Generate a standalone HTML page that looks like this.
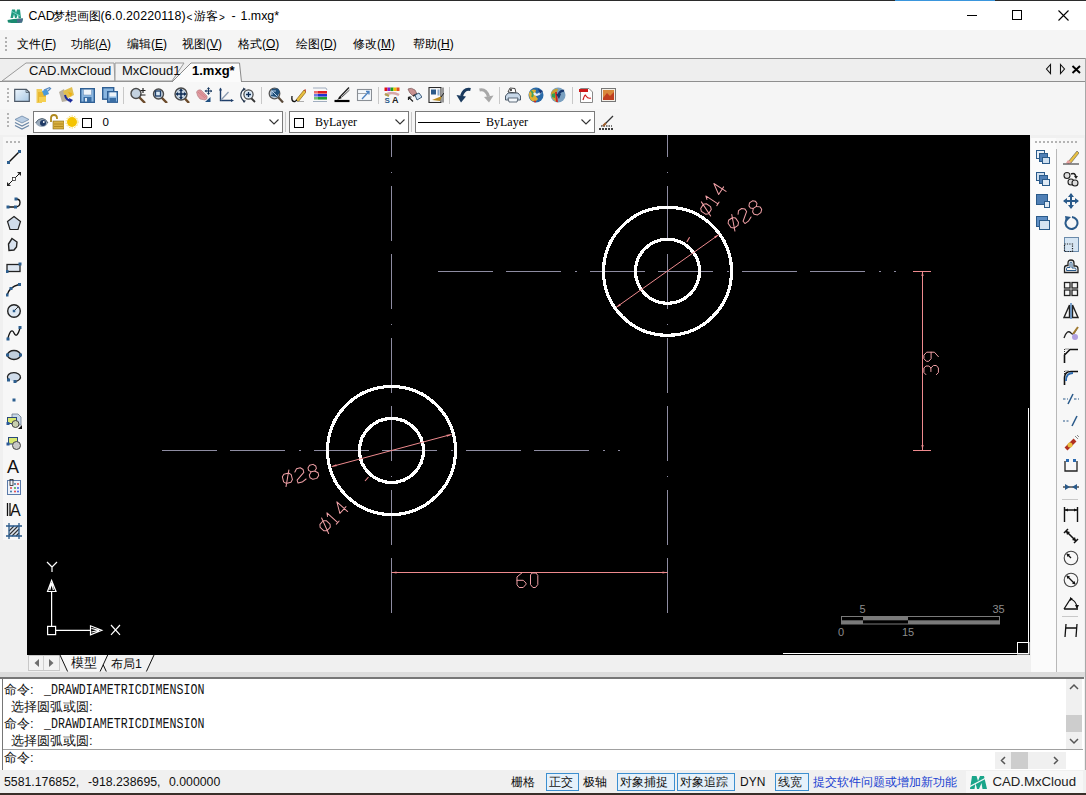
<!DOCTYPE html><html><head><meta charset="utf-8"><style>
html,body{margin:0;padding:0}
body{width:1086px;height:795px;overflow:hidden;position:relative;background:#f0f0f0;font-family:"Liberation Sans",sans-serif;color:#000}
.t{position:absolute;white-space:nowrap;font-size:12px;line-height:14px}
.m{font-family:"Liberation Mono",monospace}
svg{display:block}
</style></head><body>
<div style="position:absolute;left:0px;top:0px;width:1086px;height:30px;background:#fff"></div>
<div style="position:absolute;left:0px;top:0px;width:1086px;height:1px;background:#2b2b2b"></div>
<div style="position:absolute;left:895px;top:0px;width:100px;height:1px;background:#3a96dd"></div>
<svg style="position:absolute;left:7px;top:8px;" width="17" height="16" viewBox="0 0 17 16"><path d="M3.5 10 L5 1.5 H8 L9 5 L10 1.5 H13 L14 10 H11.5 L11 6 L9.5 10 H8 L7 6 L6 10Z" fill="#1f9a80"/><path d="M4 3 L13 8" stroke="#7fe0d0" stroke-width="0.8"/><path d="M0.5 12 Q8 10 16 10.5 L15 14.5 Q8 15.5 1 14.5Z" fill="#1a8a70"/><path d="M10 11 L16 10.5 L15 14.5 L10 14.8Z" fill="#4a6a8a"/></svg>
<div class="t" style="left:28.5px;top:9px;font-size:12.4px;color:#000">CAD</div>
<div class="t" style="left:53px;top:9px;font-size:12.4px;color:#000">梦想画图</div>
<div class="t" style="left:194px;top:9px;font-size:12.4px;color:#000">游客</div>
<div class="t" style="left:231.5px;top:9px;font-size:12.4px;color:#000">-</div>
<div class="t" style="left:240.5px;top:9px;font-size:12.4px;color:#000">1.mxg*</div>
<div class="t" style="left:100.5px;top:9px;font-size:12.4px;color:#000;letter-spacing:0.15px">(6.0.20220118)</div>
<div class="t" style="left:186.5px;top:10.5px;font-size:10px;color:#000">&lt;</div>
<div class="t" style="left:219px;top:10.5px;font-size:10px;color:#000">&gt;</div>
<div style="position:absolute;left:967px;top:15px;width:10px;height:1px;background:#000"></div>
<div style="position:absolute;left:1012px;top:10px;width:9px;height:9px;border:1px solid #000;box-sizing:border-box;width:10px;height:10px"></div>
<svg style="position:absolute;left:1058px;top:10px;" width="11" height="11" viewBox="0 0 11 11"><path d="M0.5 0.5 L10.5 10.5 M10.5 0.5 L0.5 10.5" stroke="#000" stroke-width="1.1"/></svg>
<div style="position:absolute;left:0px;top:30px;width:1086px;height:28px;background:#f5f5f5"></div>
<div style="position:absolute;left:5px;top:37px;width:2px;height:2px;background:#b0b0b0"></div>
<div style="position:absolute;left:5px;top:41px;width:2px;height:2px;background:#b0b0b0"></div>
<div style="position:absolute;left:5px;top:45px;width:2px;height:2px;background:#b0b0b0"></div>
<div style="position:absolute;left:5px;top:49px;width:2px;height:2px;background:#b0b0b0"></div>
<div class="t" style="left:17px;top:37px;font-size:12px;color:#000">文件(<u>F</u>)</div>
<div class="t" style="left:71px;top:37px;font-size:12px;color:#000">功能(<u>A</u>)</div>
<div class="t" style="left:127px;top:37px;font-size:12px;color:#000">编辑(<u>E</u>)</div>
<div class="t" style="left:182px;top:37px;font-size:12px;color:#000">视图(<u>V</u>)</div>
<div class="t" style="left:238px;top:37px;font-size:12px;color:#000">格式(<u>O</u>)</div>
<div class="t" style="left:296px;top:37px;font-size:12px;color:#000">绘图(<u>D</u>)</div>
<div class="t" style="left:353px;top:37px;font-size:12px;color:#000">修改(<u>M</u>)</div>
<div class="t" style="left:413px;top:37px;font-size:12px;color:#000">帮助(<u>H</u>)</div>
<div style="position:absolute;left:0px;top:58px;width:1086px;height:1px;background:#8e8e8e"></div>
<div style="position:absolute;left:0px;top:59px;width:1086px;height:22px;background:#eeeeee"></div>
<div style="position:absolute;left:0px;top:81px;width:1086px;height:1px;background:#8e8e8e"></div>
<svg style="position:absolute;left:0px;top:59px;" width="250" height="24" viewBox="0 0 250 24"><path d="M2 22 L26 4 L114 4 L115 22 Z" fill="#f2f2f2" stroke="#9a9a9a" stroke-width="1"/><path d="M115 22 L115 4 L184 4 L172 22 Z" fill="#f2f2f2" stroke="#9a9a9a" stroke-width="1"/><path d="M172 23 L191 4 L239.5 4 L241.5 23 Z" fill="#fbfbfb" stroke="#8a8a8a" stroke-width="1"/><rect x="173" y="22" width="68" height="2" fill="#fbfbfb"/></svg>
<div class="t" style="left:29px;top:64px;font-size:13px;color:#111">CAD.MxCloud</div>
<div class="t" style="left:122px;top:64px;font-size:13px;color:#111">MxCloud1</div>
<div class="t" style="left:192px;top:64px;font-size:13px;font-weight:bold;color:#000">1.mxg*</div>
<svg style="position:absolute;left:1043px;top:62px;" width="40" height="14" viewBox="0 0 40 14"><path d="M7.5 2.5 L3.5 7 L7.5 11.5 Z" fill="none" stroke="#111" stroke-width="1.1"/><path d="M17.5 2.5 L21.5 7 L17.5 11.5 Z" fill="none" stroke="#111" stroke-width="1.1"/><path d="M29.5 4 L37 11 M37 4 L29.5 11" stroke="#000" stroke-width="1.9"/></svg>
<div style="position:absolute;left:0px;top:82px;width:1086px;height:53px;background:#f5f5f5"></div>
<div style="position:absolute;left:0px;top:82px;width:620px;height:27px;background:#f7f7f7"></div>
<div style="position:absolute;left:7px;top:88px;width:2px;height:2px;background:#b4b4b4"></div>
<div style="position:absolute;left:7px;top:92px;width:2px;height:2px;background:#b4b4b4"></div>
<div style="position:absolute;left:7px;top:96px;width:2px;height:2px;background:#b4b4b4"></div>
<div style="position:absolute;left:7px;top:100px;width:2px;height:2px;background:#b4b4b4"></div>
<svg style="position:absolute;left:14px;top:87px;" width="16" height="16" viewBox="0 0 16 16"><defs><linearGradient id="gnew" x1="0" y1="0" x2="1" y2="1"><stop offset="0" stop-color="#eef6fd"/><stop offset="1" stop-color="#a9c8e4"/></linearGradient></defs><path d="M0.7 2.3 H12.3 L15.3 5.3 V14.3 H0.7 Z" fill="url(#gnew)" stroke="#4e5a68" stroke-width="1.2"/><path d="M12 2.5 V5.5 H15" fill="none" stroke="#4e5a68" stroke-width="0.8"/></svg>
<svg style="position:absolute;left:36px;top:87px;" width="16" height="16" viewBox="0 0 16 16"><path d="M0.5 2 H6 V16 H0.5Z" fill="#f0cc58"/><path d="M2 5 H10 V15 H2Z" fill="#e8b830"/><path d="M6 4 L11 2 L13 7 L8 9Z" fill="#4a9ad8"/><path d="M8 3 L14 0.5 M12 4 L15 1" stroke="#5a8ac0" stroke-width="1.3"/><rect x="3" y="10" width="7" height="5" fill="#f5d050"/></svg>
<svg style="position:absolute;left:58px;top:87px;" width="16" height="16" viewBox="0 0 16 16"><path d="M1 5 L6 2 L9 14 L4 15Z" fill="#b8b0a0"/><path d="M5 4 L14 0 L16 8 L8 12Z" fill="#e2c050"/><path d="M10 5 L14 6 L13 10Z" fill="#f0b010"/><path d="M7 8 Q8 13 13 14" stroke="#1a2a9a" stroke-width="2" fill="none"/><path d="M15 13 L11 11 L12 16Z" fill="#1a2a9a"/></svg>
<svg style="position:absolute;left:80px;top:87px;" width="16" height="16" viewBox="0 0 16 16"><rect x="0.7" y="1.7" width="13.6" height="13.6" fill="#8ab6e0" stroke="#2f5f94" stroke-width="1.4"/><rect x="3.5" y="2.5" width="8" height="5.5" fill="#eef4fa" stroke="#6a8ab0" stroke-width="0.5"/><rect x="3.5" y="10" width="8" height="5" fill="#3a6ea5"/><rect x="5" y="11" width="2" height="3.5" fill="#dfeaf5"/></svg>
<svg style="position:absolute;left:102px;top:87px;" width="16" height="16" viewBox="0 0 16 16"><rect x="0.7" y="0.7" width="11" height="11.5" fill="#8ab6e0" stroke="#2f5f94" stroke-width="1.4"/><rect x="5.7" y="4.7" width="10" height="10.5" fill="#8ab6e0" stroke="#2f5f94" stroke-width="1.4"/><rect x="7.5" y="5.5" width="6.5" height="4" fill="#eef4fa"/><rect x="7.5" y="11" width="6.5" height="4" fill="#3a6ea5"/></svg>
<svg style="position:absolute;left:130px;top:87px;" width="16" height="16" viewBox="0 0 16 16"><path d="M9 10.0 L15 16" stroke="#6b4a2a" stroke-width="2.4"/><circle cx="6" cy="6.5" r="5" fill="#c4d2e0" stroke="#4a4a4a" stroke-width="1.4"/><path d="M13 1 V6 M10.5 3.5 H15.5 M10.5 8 H15.5" stroke="#222" stroke-width="1.2"/></svg>
<svg style="position:absolute;left:152px;top:87px;" width="16" height="16" viewBox="0 0 16 16"><path d="M9.5 10.5 L15 16" stroke="#6b4a2a" stroke-width="2.4"/><circle cx="6.5" cy="7" r="5" fill="#c4d2e0" stroke="#4a4a4a" stroke-width="1.4"/><rect x="3.5" y="4" width="5" height="5" fill="#d8e8f5" stroke="#1f3f6a" stroke-width="1.3"/></svg>
<svg style="position:absolute;left:174px;top:87px;" width="16" height="16" viewBox="0 0 16 16"><path d="M10 10.5 L15 16" stroke="#6b4a2a" stroke-width="2.4"/><circle cx="7" cy="7" r="6" fill="#c4d2e0" stroke="#4a4a4a" stroke-width="1.4"/><path d="M7 2.5 V11.5 M2.5 7 H11.5" stroke="#0f2d55" stroke-width="1.5"/><path d="M7 1.5 L5 4 H9Z M7 12.5 L5 10 H9Z M1.5 7 L4 5 V9Z M12.5 7 L10 5 V9Z" fill="#0f2d55"/></svg>
<svg style="position:absolute;left:196px;top:87px;" width="16" height="16" viewBox="0 0 16 16"><path d="M0.5 5 Q2 2 5 3 L11 9 Q12 12 9 13 L4 12 Q1 9 0.5 5Z" fill="#e09aa0" stroke="#b07a80" stroke-width="0.6"/><path d="M2 5 L9 11 M3.5 4 L10 10" stroke="#c06a70" stroke-width="0.5"/><path d="M14.5 10 L14.5 15 H9 Z" fill="#1f4f80"/><path d="M12.5 1 V7 M9.5 4 H15.5" stroke="#1a3a60" stroke-width="1.2"/><path d="M12.5 0 L11 2 H14Z M12.5 8 L11 6 H14Z M8.5 4 L10.5 2.5 V5.5Z M16.5 4 L14.5 2.5 V5.5Z" fill="#1a3a60"/></svg>
<svg style="position:absolute;left:218px;top:87px;" width="16" height="16" viewBox="0 0 16 16"><path d="M2.5 1.5 V13.5 H14" fill="none" stroke="#1f3f6a" stroke-width="1.4"/><path d="M1 3.5 L2.5 0.5 L4 3.5Z M13 12 L16 13.5 L13 15Z" fill="#1f3f6a"/><path d="M3 13 L10.5 5" stroke="#8a9ab0" stroke-width="1.2"/></svg>
<svg style="position:absolute;left:240px;top:87px;" width="16" height="16" viewBox="0 0 16 16"><path d="M4 2 Q0 5 1 10 Q2 13 4.5 14.5" fill="none" stroke="#2a3a50" stroke-width="1.1"/><path d="M3 0.5 L6 2 L3.5 4Z M4 16 L6 13.5 L2.5 13.5Z" fill="#2a3a50"/><path d="M11 11 L15 15" stroke="#333" stroke-width="1.8"/><circle cx="8.5" cy="7.5" r="4.6" fill="#dbe8f4" stroke="#444" stroke-width="1.2"/><path d="M8.5 5 V10 M6 7.5 H11" stroke="#0f2d55" stroke-width="1.3"/></svg>
<svg style="position:absolute;left:268px;top:87px;" width="16" height="16" viewBox="0 0 16 16"><path d="M10 10 L15 15.5" stroke="#5a4a3a" stroke-width="2.2"/><circle cx="6.5" cy="6.5" r="5.3" fill="#b8c8d8" stroke="#555" stroke-width="1.3"/><path d="M4 2 L10 1.5 L12 5 L9 10 L3 9 Z" fill="#1f4f7a"/><path d="M4 4 L9 9 M4 4 V8 M4 4 H8" stroke="#b8d0e8" stroke-width="1"/></svg>
<svg style="position:absolute;left:290px;top:87px;" width="16" height="16" viewBox="0 0 16 16"><path d="M6 13 L14 3 L16 5 L8 15Z" fill="#e8c040" stroke="#8a6010" stroke-width="0.7"/><path d="M14 3 L16 5 L15.5 2Z" fill="#c03020"/><path d="M2 9 Q1 15 5 14.5 L7 13" fill="none" stroke="#111" stroke-width="1.3"/><path d="M7 14.5 H14" stroke="#999" stroke-width="0.8"/></svg>
<svg style="position:absolute;left:312px;top:87px;" width="16" height="16" viewBox="0 0 16 16"><path d="M1 1 H14 L15 3" stroke="#8a9ab0" fill="none" stroke-width="0.8"/><rect x="2" y="4" width="13" height="2.6" fill="#e02020"/><rect x="2" y="7" width="13" height="2.6" fill="#2030d0"/><rect x="2" y="10" width="13" height="2.6" fill="#20a030"/><path d="M1 14.5 H15" stroke="#8a9ab0" stroke-width="0.8"/><rect x="2" y="4" width="4" height="9" fill="#fff" opacity="0.35"/></svg>
<svg style="position:absolute;left:334px;top:87px;" width="16" height="16" viewBox="0 0 16 16"><path d="M0.5 14 H15.5" stroke="#000" stroke-width="2.2"/><path d="M5 11 L15 0.5" stroke="#222" stroke-width="1.4"/><path d="M8 10 L15.5 3" stroke="#444" stroke-width="0.9"/><path d="M3 13 L6 9.5 L8 11 Z" fill="#111"/></svg>
<svg style="position:absolute;left:356px;top:87px;" width="16" height="16" viewBox="0 0 16 16"><rect x="1.5" y="2.5" width="14" height="11" fill="#f4f8fc" stroke="#8a8f95" stroke-width="1.1"/><path d="M1.5 6.5 H10" stroke="#8a8f95" stroke-width="0.8"/><path d="M6 12 L13 4.5 M10 4.5 H13 V7.5" stroke="#4a80c0" stroke-width="1.3" fill="none"/></svg>
<svg style="position:absolute;left:384px;top:87px;" width="16" height="16" viewBox="0 0 16 16"><rect x="0.5" y="0.5" width="3" height="3.5" fill="#e01010"/><rect x="3.5" y="0.5" width="3" height="3.5" fill="#8020d0"/><rect x="6.5" y="0.5" width="3" height="3.5" fill="#20a020"/><rect x="9.5" y="0.5" width="3" height="3.5" fill="#f0c000"/><rect x="12.5" y="0.5" width="3" height="3.5" fill="#e05020"/><path d="M1 8 Q8 4 15 8" stroke="#d8a8a8" stroke-width="2.5" fill="none"/><path d="M1 7 L5 9" stroke="#b0a050" stroke-width="2"/><text x="0.5" y="15.5" font-size="8" font-family="Liberation Sans" font-weight="bold" fill="#2a5a8a">S</text><text x="8" y="15.5" font-size="9" font-family="Liberation Sans" font-weight="bold" fill="#222">A</text></svg>
<svg style="position:absolute;left:406px;top:87px;" width="16" height="16" viewBox="0 0 16 16"><path d="M2 2 Q5 0 9 3 L11 7 L7 9 Q3 6 2 2Z" fill="#c89090" stroke="#7a5a5a" stroke-width="0.7"/><path d="M7 9 L11 7" stroke="#333" stroke-width="1.5"/><path d="M9 8 L13 6 L16 10 L11 13Z" fill="#cfe2f5" stroke="#2a4a6a" stroke-width="0.9"/><path d="M2.5 10 L7 14.5 M2.5 10 V13 M2.5 10 H5.5" stroke="#222" stroke-width="1.2" fill="none"/></svg>
<svg style="position:absolute;left:428px;top:87px;" width="16" height="16" viewBox="0 0 16 16"><rect x="1" y="0.5" width="12" height="15" fill="#fbfbfb" stroke="#2a2a2a" stroke-width="1.1"/><rect x="3" y="2.5" width="5" height="5" fill="#2a5a8a"/><rect x="9.5" y="2.5" width="2" height="6" fill="#8aa8c8"/><rect x="13" y="0.5" width="3" height="15" fill="#9a9a9a"/><path d="M4 13 L9 11 L14 9 L12 14 Z" fill="#b88a20"/><path d="M13 10 L16 6" stroke="#222" stroke-width="1"/></svg>
<svg style="position:absolute;left:456px;top:87px;" width="16" height="16" viewBox="0 0 16 16"><path d="M14.5 2.5 Q8 1 5.5 9" fill="none" stroke="#1a3a5e" stroke-width="3"/><path d="M0.5 8 L5 15.5 L10 9.5Z" fill="#1a3a5e"/></svg>
<svg style="position:absolute;left:478px;top:87px;" width="16" height="16" viewBox="0 0 16 16"><path d="M1.5 3 Q8 1.5 10.5 9.5" fill="none" stroke="#a8a8a8" stroke-width="3"/><path d="M15.5 8.5 L11 15.5 L6 10Z" fill="#a8a8a8"/></svg>
<svg style="position:absolute;left:505px;top:87px;" width="16" height="16" viewBox="0 0 16 16"><path d="M3 5 L5 1 L10 1.5 L11 6Z" fill="#fff" stroke="#333" stroke-width="0.9"/><path d="M0.5 9 L3 6 H13 L15.5 9 V13 H0.5Z" fill="#c8d8e8" stroke="#3a4a5a" stroke-width="0.9"/><path d="M3 11 H13 L12 15 H4Z" fill="#f4f8fc" stroke="#3a4a5a" stroke-width="0.8"/><circle cx="6" cy="3" r="0.9" fill="#000"/></svg>
<svg style="position:absolute;left:528px;top:87px;" width="16" height="16" viewBox="0 0 16 16"><circle cx="8" cy="8" r="7.5" fill="#2a6aa8"/><path d="M1 6 Q4 1 8 3 Q6 8 10 12 Q8 15.5 4 14 Q0.5 11 1 6Z" fill="#e0b030"/><path d="M3 4 Q6 6 4 10" stroke="#40a060" stroke-width="2" fill="none"/><path d="M6 6 Q9 10 13 5" stroke="#e8f0f8" stroke-width="2.2" fill="none"/><path d="M10 2 L15 4 L12 7Z" fill="#1a3a7a"/><circle cx="7" cy="14.5" r="1" fill="#d02020"/></svg>
<svg style="position:absolute;left:550px;top:87px;" width="16" height="16" viewBox="0 0 16 16"><circle cx="8" cy="8" r="7.5" fill="#7aa0c0"/><path d="M1 6 Q4 1 8 2 Q5 8 8 15.5 Q2 14 1 6Z" fill="#c8a030"/><path d="M2 7 L5 6 L5 11 L2 10Z" fill="#30a050"/><path d="M6 5 L7 15" stroke="#d02020" stroke-width="1.8"/><path d="M8 9 Q10 3 14 4" stroke="#1a3a6e" stroke-width="2.4" fill="none"/><path d="M6 7 L9 12 L11 7Z" fill="#1a3a6e"/></svg>
<svg style="position:absolute;left:578px;top:87px;" width="16" height="16" viewBox="0 0 16 16"><path d="M2.5 1.5 H11 L14.5 5 V15.5 H2.5Z" fill="#fff" stroke="#888"/><rect x="1" y="2" width="9" height="3" fill="#cc1a1a"/><path d="M5 13 Q7 6 8 9 Q10 12 13 11" stroke="#cc1a1a" fill="none" stroke-width="1.2"/></svg>
<svg style="position:absolute;left:600px;top:87px;" width="16" height="16" viewBox="0 0 16 16"><rect x="1.5" y="1.5" width="14" height="13" fill="#f4f0e8" stroke="#777"/><rect x="3" y="3" width="11" height="10" fill="#d9883a"/><path d="M3 11 L7 6 L10 9 L14 5 V13 H3Z" fill="#c04020"/></svg>
<div style="position:absolute;left:123px;top:87px;width:1px;height:17px;background:#c8c8c8"></div>
<div style="position:absolute;left:261px;top:87px;width:1px;height:17px;background:#c8c8c8"></div>
<div style="position:absolute;left:378px;top:87px;width:1px;height:17px;background:#c8c8c8"></div>
<div style="position:absolute;left:449px;top:87px;width:1px;height:17px;background:#c8c8c8"></div>
<div style="position:absolute;left:499px;top:87px;width:1px;height:17px;background:#c8c8c8"></div>
<div style="position:absolute;left:572px;top:87px;width:1px;height:17px;background:#c8c8c8"></div>
<div style="position:absolute;left:7px;top:113px;width:2px;height:2px;background:#b4b4b4"></div>
<div style="position:absolute;left:7px;top:117px;width:2px;height:2px;background:#b4b4b4"></div>
<div style="position:absolute;left:7px;top:121px;width:2px;height:2px;background:#b4b4b4"></div>
<div style="position:absolute;left:7px;top:125px;width:2px;height:2px;background:#b4b4b4"></div>
<svg style="position:absolute;left:14px;top:114px;" width="16" height="16" viewBox="0 0 16 16"><path d="M8 2 L15 5.5 L8 9 L1 5.5Z" fill="#b9cde3" stroke="#6a86a6" stroke-width="0.8"/><path d="M1 8.5 L8 12 L15 8.5" fill="none" stroke="#6a86a6" stroke-width="1.2"/><path d="M1 11.5 L8 15 L15 11.5" fill="none" stroke="#6a86a6" stroke-width="1.2"/></svg>
<div style="position:absolute;left:33px;top:111px;width:250px;height:22px;background:#fff;border:1px solid #7a7a7a;box-sizing:border-box"></div>
<svg style="position:absolute;left:35px;top:115px;" width="14" height="14" viewBox="0 0 14 14"><path d="M0.5 8 Q3 3.5 7 3.5 Q11 3.5 13 8 Q11 12 7 12 Q3 12 0.5 8Z" fill="#9aaabb"/><path d="M0.5 8 Q3 3.5 7 3.5 Q11 3.5 13 8" fill="none" stroke="#3a4a5a" stroke-width="0.8"/><circle cx="8" cy="8" r="3" fill="#1f3a66"/><circle cx="8.8" cy="7" r="0.9" fill="#fff"/></svg>
<svg style="position:absolute;left:48px;top:114px;" width="16" height="16" viewBox="0 0 16 16"><path d="M3 8 V4 Q3 1 6 1 Q9 1 9 4 V5" fill="none" stroke="#b08a20" stroke-width="1.8"/><rect x="5" y="7" width="11" height="8" fill="#d8b040" stroke="#8a6a10" stroke-width="0.6"/><path d="M6 10 H15 M6 12.5 H15" stroke="#a8801a" stroke-width="0.8"/></svg>
<svg style="position:absolute;left:65px;top:114px;" width="16" height="16" viewBox="0 0 16 16"><circle cx="7" cy="8" r="5" fill="#f5c400"/><circle cx="7" cy="8" r="6" fill="none" stroke="#f8d850" stroke-width="1" stroke-dasharray="1.5 1.2"/></svg>
<div style="position:absolute;left:82px;top:118px;width:10px;height:10px;border:1px solid #000;box-sizing:border-box"></div>
<div class="t" style="left:102.5px;top:115px;font-size:11.5px">0</div>
<svg style="position:absolute;left:269px;top:119px;" width="10" height="6" viewBox="0 0 10 6"><path d="M0.5 0.5 L5 5 L9.5 0.5" fill="none" stroke="#333" stroke-width="1.1"/></svg>
<div style="position:absolute;left:285px;top:112px;width:1px;height:20px;background:#c8c8c8"></div>
<div style="position:absolute;left:289px;top:111px;width:120px;height:22px;background:#fff;border:1px solid #7a7a7a;box-sizing:border-box"></div>
<div style="position:absolute;left:294px;top:118px;width:10px;height:10px;border:1px solid #000;box-sizing:border-box"></div>
<div class="t" style="left:315px;top:115px;font-family:Liberation Serif;font-size:12px">ByLayer</div>
<svg style="position:absolute;left:395px;top:119px;" width="10" height="6" viewBox="0 0 10 6"><path d="M0.5 0.5 L5 5 L9.5 0.5" fill="none" stroke="#333" stroke-width="1.1"/></svg>
<div style="position:absolute;left:411px;top:112px;width:1px;height:20px;background:#c8c8c8"></div>
<div style="position:absolute;left:415px;top:111px;width:180px;height:22px;background:#fff;border:1px solid #7a7a7a;box-sizing:border-box"></div>
<div style="position:absolute;left:418px;top:122px;width:62px;height:1px;background:#000"></div>
<div class="t" style="left:486px;top:115px;font-family:Liberation Serif;font-size:12px">ByLayer</div>
<svg style="position:absolute;left:581px;top:119px;" width="10" height="6" viewBox="0 0 10 6"><path d="M0.5 0.5 L5 5 L9.5 0.5" fill="none" stroke="#333" stroke-width="1.1"/></svg>
<svg style="position:absolute;left:598px;top:114px;" width="16" height="16" viewBox="0 0 16 16"><path d="M1 15 H15" stroke="#000" stroke-width="1.5" stroke-dasharray="2 1"/><path d="M3 12 H14" stroke="#000" stroke-dasharray="1.5 1"/><path d="M5 12 L15 2" stroke="#333" stroke-width="1.3"/><path d="M5 12 L8 9" stroke="#a06030" stroke-width="2"/></svg>
<div style="position:absolute;left:0px;top:135px;width:27px;height:520px;background:#f0f0f0"></div>
<div style="position:absolute;left:3px;top:137px;width:24px;height:403px;background:#f7f7f7"></div>
<div style="position:absolute;left:6px;top:141px;width:2px;height:2px;background:#b4b4b4"></div>
<div style="position:absolute;left:10px;top:141px;width:2px;height:2px;background:#b4b4b4"></div>
<div style="position:absolute;left:14px;top:141px;width:2px;height:2px;background:#b4b4b4"></div>
<div style="position:absolute;left:18px;top:141px;width:2px;height:2px;background:#b4b4b4"></div>
<svg style="position:absolute;left:6px;top:149px;" width="16" height="16" viewBox="0 0 16 16"><path d="M2.5 13.5 L13.5 2.5" stroke="#111" stroke-width="1.4"/><rect x="1.0" y="12.0" width="3" height="3" fill="#2d5f8f"/><rect x="12.0" y="1.0" width="3" height="3" fill="#2d5f8f"/></svg>
<svg style="position:absolute;left:6px;top:171px;" width="16" height="16" viewBox="0 0 16 16"><path d="M2 14 L14 2" stroke="#111" stroke-width="1"/><path d="M1 15 L1 11 L5 15Z M15 1 L15 5 L11 1Z" fill="#222"/><rect x="6.5" y="6.5" width="3" height="3" fill="#fff" stroke="#333" stroke-width="0.8"/></svg>
<svg style="position:absolute;left:6px;top:193px;" width="16" height="16" viewBox="0 0 16 16"><path d="M2 14 H9 Q14 14 14 9.5 Q14 6 10 6" fill="none" stroke="#111" stroke-width="1.3"/><rect x="0.5" y="12.5" width="3" height="3" fill="#2d5f8f"/><rect x="8.0" y="12.5" width="3" height="3" fill="#2d5f8f"/><rect x="8.5" y="4.5" width="3" height="3" fill="#2d5f8f"/></svg>
<svg style="position:absolute;left:6px;top:215px;" width="16" height="16" viewBox="0 0 16 16"><path d="M8 1.5 L14.5 6.5 L12 14.5 H4 L1.5 6.5Z" fill="#d0dcea" stroke="#222" stroke-width="1.2"/></svg>
<svg style="position:absolute;left:6px;top:237px;" width="16" height="16" viewBox="0 0 16 16"><path d="M6 1.5 L11 5 L10.5 10 L8 13 L3 13.5 L2.5 7Z" fill="#d8e2ee" stroke="#222" stroke-width="1.4"/></svg>
<svg style="position:absolute;left:6px;top:259px;" width="16" height="16" viewBox="0 0 16 16"><rect x="1" y="5.5" width="13" height="7" fill="#dde6f0" stroke="#222" stroke-width="1.3"/><rect x="12.5" y="3.5" width="3" height="3" fill="#2d5f8f"/><rect x="-0.5" y="11.0" width="3" height="3" fill="#2d5f8f"/></svg>
<svg style="position:absolute;left:6px;top:281px;" width="16" height="16" viewBox="0 0 16 16"><path d="M1 14.5 Q3 6 13 3.5" fill="none" stroke="#111" stroke-width="1.3"/><rect x="-0.5" y="12.5" width="3" height="3" fill="#2d5f8f"/><rect x="12.0" y="2.0" width="3" height="3" fill="#2d5f8f"/><rect x="3.5" y="6.0" width="3" height="3" fill="#2d5f8f"/></svg>
<svg style="position:absolute;left:6px;top:303px;" width="16" height="16" viewBox="0 0 16 16"><circle cx="8" cy="8" r="6.3" fill="#dfe8f2" stroke="#222" stroke-width="1.4"/><path d="M8 8 L12 4" stroke="#333"/><rect x="6.75" y="6.75" width="2.5" height="2.5" fill="#2d5f8f"/></svg>
<svg style="position:absolute;left:6px;top:325px;" width="16" height="16" viewBox="0 0 16 16"><path d="M2 13 Q5 2 8 8 Q11 14 14 3" fill="none" stroke="#111" stroke-width="1.3"/><rect x="0.5" y="12.5" width="3" height="3" fill="#2d5f8f"/><rect x="12.5" y="1.0" width="3" height="3" fill="#2d5f8f"/></svg>
<svg style="position:absolute;left:6px;top:347px;" width="16" height="16" viewBox="0 0 16 16"><ellipse cx="8" cy="8" rx="6.5" ry="4.5" fill="#c0cedc" stroke="#222" stroke-width="1.4"/><rect x="0.0" y="6.5" width="3" height="3" fill="#2d5f8f"/><rect x="13.0" y="6.5" width="3" height="3" fill="#2d5f8f"/></svg>
<svg style="position:absolute;left:6px;top:369px;" width="16" height="16" viewBox="0 0 16 16"><path d="M3 11 A6.5 4.5 0 1 1 9 12.5" fill="#d0dcea" stroke="#222" stroke-width="1.3"/><rect x="1.0" y="9.5" width="3" height="3" fill="#2d5f8f"/><rect x="7.5" y="11.0" width="3" height="3" fill="#2d5f8f"/></svg>
<svg style="position:absolute;left:6px;top:391px;" width="16" height="16" viewBox="0 0 16 16"><rect x="6.5" y="7.5" width="3" height="3" fill="#2d5f8f"/></svg>
<svg style="position:absolute;left:6px;top:413px;" width="16" height="16" viewBox="0 0 16 16"><path d="M6 1 H12 L15 4 V12 H6Z" fill="#c8d8e8" stroke="#6a7a8a" stroke-width="0.8"/><rect x="1.5" y="4.5" width="9" height="6" fill="#d8e870" stroke="#2a4a7a" stroke-width="1"/><rect x="0.5" y="9" width="3" height="3" fill="#2a5a9a"/><circle cx="9.5" cy="11" r="3.5" fill="#c8d0b0" stroke="#444" stroke-width="1"/><path d="M16 12 V16 H12Z" fill="#111"/></svg>
<svg style="position:absolute;left:6px;top:435px;" width="16" height="16" viewBox="0 0 16 16"><rect x="2.5" y="2.5" width="9" height="6.5" fill="#d8e870" stroke="#2a4a7a" stroke-width="1"/><rect x="0.5" y="7.5" width="3" height="3" fill="#2a5a9a"/><circle cx="10.5" cy="10.5" r="4" fill="#c8c8c8" stroke="#444" stroke-width="1"/></svg>
<svg style="position:absolute;left:6px;top:457px;" width="16" height="16" viewBox="0 0 16 16"><text x="1" y="15.5" font-size="18" font-family="Liberation Sans" fill="#111">A</text></svg>
<svg style="position:absolute;left:6px;top:479px;" width="16" height="16" viewBox="0 0 16 16"><rect x="1.5" y="1.5" width="13" height="14" fill="#eef2fa" stroke="#5a7aa8"/><rect x="4" y="0.5" width="3" height="6" fill="none" stroke="#222" stroke-width="0.8"/><circle cx="9" cy="5" r="0.9" fill="#2a6a9a"/><circle cx="12" cy="5" r="0.9" fill="#e03030"/><circle cx="5" cy="9" r="0.9" fill="#e03030"/><circle cx="9" cy="9" r="0.9" fill="#30a030"/><circle cx="12" cy="9" r="0.9" fill="#3050e0"/><circle cx="5" cy="12.5" r="0.9" fill="#2a6a9a"/><circle cx="9" cy="12.5" r="0.9" fill="#e03030"/><circle cx="12" cy="12.5" r="0.9" fill="#3050e0"/></svg>
<svg style="position:absolute;left:6px;top:501px;" width="16" height="16" viewBox="0 0 16 16"><path d="M1.5 2 V15 M4 2 V15" stroke="#111" stroke-width="1.3"/><text x="4" y="15" font-size="16" font-family="Liberation Sans" fill="#111">A</text></svg>
<svg style="position:absolute;left:6px;top:523px;" width="16" height="16" viewBox="0 0 16 16"><rect x="3" y="3" width="10" height="10" fill="#dde6f0"/><path d="M3 8 L8 3 M3 12 L12 3 M6 13 L13 6 M10 13 L13 10" stroke="#333" stroke-width="1.1"/><path d="M0 3 H16 M0 13 H16 M3 0 V16 M13 0 V16" stroke="#2a5a8a" stroke-width="1.3"/></svg>
<div style="position:absolute;left:1030px;top:135px;width:56px;height:537px;background:#f0f0f0"></div>
<div style="position:absolute;left:1031px;top:138px;width:53px;height:534px;background:#f7f7f7"></div>
<div style="position:absolute;left:1031px;top:138px;width:25px;height:534px;background:#fbfbfb"></div>
<div style="position:absolute;left:1035px;top:141px;width:2px;height:2px;background:#b4b4b4"></div>
<div style="position:absolute;left:1039px;top:141px;width:2px;height:2px;background:#b4b4b4"></div>
<div style="position:absolute;left:1043px;top:141px;width:2px;height:2px;background:#b4b4b4"></div>
<div style="position:absolute;left:1047px;top:141px;width:2px;height:2px;background:#b4b4b4"></div>
<div style="position:absolute;left:1051px;top:141px;width:2px;height:2px;background:#b4b4b4"></div>
<div style="position:absolute;left:1055px;top:141px;width:2px;height:2px;background:#b4b4b4"></div>
<div style="position:absolute;left:1059px;top:141px;width:2px;height:2px;background:#b4b4b4"></div>
<div style="position:absolute;left:1063px;top:141px;width:2px;height:2px;background:#b4b4b4"></div>
<div style="position:absolute;left:1067px;top:141px;width:2px;height:2px;background:#b4b4b4"></div>
<div style="position:absolute;left:1071px;top:141px;width:2px;height:2px;background:#b4b4b4"></div>
<div style="position:absolute;left:1075px;top:141px;width:2px;height:2px;background:#b4b4b4"></div>
<div style="position:absolute;left:1056px;top:149px;width:1px;height:523px;background:#b8b8b8"></div>
<svg style="position:absolute;left:1035px;top:149px;" width="16" height="16" viewBox="0 0 16 16"><rect x="1.5" y="1.5" width="8" height="8" fill="#e8f0f8" stroke="#2a5a8a"/><rect x="4.5" y="4.5" width="8" height="8" fill="#4f7fb5" stroke="#2a5a8a"/><rect x="7.5" y="8.5" width="7" height="6" fill="#cfe0f0" stroke="#2a5a8a"/></svg>
<svg style="position:absolute;left:1035px;top:171px;" width="16" height="16" viewBox="0 0 16 16"><rect x="1.5" y="1.5" width="8" height="8" fill="#cfe0f0" stroke="#2a5a8a"/><rect x="4.5" y="4.5" width="8" height="8" fill="#4f7fb5" stroke="#2a5a8a"/><rect x="7.5" y="8.5" width="7" height="6" fill="#dfeaf5" stroke="#2a5a8a"/></svg>
<svg style="position:absolute;left:1035px;top:193px;" width="16" height="16" viewBox="0 0 16 16"><rect x="1.5" y="1.5" width="11" height="10" fill="#4f7fb5" stroke="#2a5a8a"/><rect x="9.5" y="8.5" width="5" height="6" fill="#dfeaf5" stroke="#2a5a8a"/></svg>
<svg style="position:absolute;left:1035px;top:215px;" width="16" height="16" viewBox="0 0 16 16"><rect x="1.5" y="1.5" width="11" height="10" fill="#5f8fc5" stroke="#2a5a8a"/><rect x="4.5" y="5.5" width="10" height="9" fill="#d5e3f2" stroke="#2a5a8a"/></svg>
<svg style="position:absolute;left:1063px;top:149px;" width="16" height="16" viewBox="0 0 16 16"><path d="M5 13 L14 2 L16 4 L8 14Z" fill="#e8c040" stroke="#555" stroke-width="0.6"/><path d="M3 14 L5 11 L8 13 L6 15Z" fill="#e8a0a0"/><path d="M0 15 H16" stroke="#222"/></svg>
<svg style="position:absolute;left:1063px;top:171px;" width="16" height="16" viewBox="0 0 16 16"><circle cx="4" cy="4.5" r="3" fill="#ddd" stroke="#222" stroke-width="1.1"/><circle cx="8" cy="11" r="3" fill="#ddd" stroke="#222" stroke-width="1.1"/><circle cx="12" cy="12" r="3" fill="#ddd" stroke="#222" stroke-width="1.1"/><path d="M8 3 Q12 1 13 6" fill="none" stroke="#222" stroke-width="1.5"/><path d="M11 5 L15 5 L13 8Z" fill="#222"/></svg>
<svg style="position:absolute;left:1063px;top:193px;" width="16" height="16" viewBox="0 0 16 16"><path d="M8 1 V15 M1 8 H15" stroke="#2a5a8a" stroke-width="2"/><path d="M8 0 L5 4 H11Z M8 16 L5 12 H11Z M0 8 L4 5 V11Z M16 8 L12 5 V11Z" fill="#2a5a8a"/></svg>
<svg style="position:absolute;left:1063px;top:215px;" width="16" height="16" viewBox="0 0 16 16"><path d="M4 4 A6 6 0 1 0 9 2" fill="none" stroke="#2a5a8a" stroke-width="2"/><path d="M2 1 L8 2 L3 7Z" fill="#2a5a8a"/></svg>
<svg style="position:absolute;left:1063px;top:237px;" width="16" height="16" viewBox="0 0 16 16"><rect x="1.5" y="0.5" width="14" height="14" fill="#d5e5f3" stroke="#6a8aaa" stroke-width="1"/><rect x="1.5" y="7" width="8" height="7.5" fill="none" stroke="#222" stroke-width="1.2" stroke-dasharray="1.2 1.2"/></svg>
<svg style="position:absolute;left:1063px;top:259px;" width="16" height="16" viewBox="0 0 16 16"><path d="M1.5 13.5 V9 Q1.5 6.5 4 6.5 H5 V4 Q5 1 8 1 Q11 1 11 4 V7 H12.5 Q15 7 15 10 V13.5Z" fill="none" stroke="#222" stroke-width="1.3"/><path d="M3.5 11.5 V9.5 Q3.5 8.5 5 8.5 H7 V4.5 Q7 3 8 3 Q9 3 9 4.5 V9 H12 Q13 9 13 10.5 V11.5Z" fill="none" stroke="#2a5a8a" stroke-width="1"/></svg>
<svg style="position:absolute;left:1063px;top:281px;" width="16" height="16" viewBox="0 0 16 16"><rect x="1.5" y="1.5" width="5.5" height="5.5" fill="none" stroke="#222" stroke-width="1.3"/><rect x="9" y="1.5" width="5.5" height="5.5" fill="none" stroke="#222" stroke-width="1.3"/><rect x="1.5" y="9" width="5.5" height="5.5" fill="none" stroke="#222" stroke-width="1.3"/><rect x="9" y="9" width="5.5" height="5.5" fill="none" stroke="#222" stroke-width="1.3"/></svg>
<svg style="position:absolute;left:1063px;top:303px;" width="16" height="16" viewBox="0 0 16 16"><path d="M6.5 2 V14.5 H1Z M9.5 2 V14.5 H15Z" fill="none" stroke="#222" stroke-width="1.4"/><path d="M8 0 V16" stroke="#2a6ab0" stroke-width="1.2"/></svg>
<svg style="position:absolute;left:1063px;top:325px;" width="16" height="16" viewBox="0 0 16 16"><path d="M1 13 Q4 4 8 8 Q10 11 13 5" fill="none" stroke="#222" stroke-width="1.3"/><path d="M10 9 L15 2" stroke="#a07a30" stroke-width="2"/><circle cx="12" cy="12" r="3" fill="#b0a0e0"/></svg>
<svg style="position:absolute;left:1063px;top:347px;" width="16" height="16" viewBox="0 0 16 16"><path d="M1.5 16 V8 L7 2.5 H15" fill="none" stroke="#111" stroke-width="1.6"/><path d="M1.5 7 V2 H6" fill="none" stroke="#333" stroke-width="1" stroke-dasharray="1 1"/></svg>
<svg style="position:absolute;left:1063px;top:369px;" width="16" height="16" viewBox="0 0 16 16"><path d="M1.5 16 V9 Q1.5 2.5 8 2.5 H15" fill="none" stroke="#111" stroke-width="1.6"/><path d="M3 12 Q3 4 10 4" fill="none" stroke="#2a6ab0" stroke-width="1.8"/><path d="M1.5 7 V2 H6" fill="none" stroke="#333" stroke-width="1" stroke-dasharray="1 1"/></svg>
<svg style="position:absolute;left:1063px;top:391px;" width="16" height="16" viewBox="0 0 16 16"><path d="M0 8 H5 M11 8 H16" stroke="#2a5a8a" stroke-width="1.2" stroke-dasharray="2.5 1.5"/><path d="M5 13 L10 3" stroke="#2a5a8a" stroke-width="1.5"/></svg>
<svg style="position:absolute;left:1063px;top:413px;" width="16" height="16" viewBox="0 0 16 16"><path d="M0 8 H7" stroke="#2a5a8a" stroke-width="1.2" stroke-dasharray="2 1.5"/><path d="M9 13 L14 3" stroke="#2a5a8a" stroke-width="1.5"/></svg>
<svg style="position:absolute;left:1063px;top:435px;" width="16" height="16" viewBox="0 0 16 16"><path d="M3 14 L12 5" stroke="#b03020" stroke-width="4"/><circle cx="7" cy="10" r="2.5" fill="#e8c040"/><path d="M12 1 L15 4 M14 0 L16 2" stroke="#888"/></svg>
<svg style="position:absolute;left:1063px;top:457px;" width="16" height="16" viewBox="0 0 16 16"><path d="M2 4 V14 H14 V4" fill="none" stroke="#222" stroke-width="1.3"/><rect x="3" y="2" width="3" height="3" fill="#2a6ab0"/><rect x="10" y="2" width="3" height="3" fill="#2a6ab0"/></svg>
<svg style="position:absolute;left:1063px;top:479px;" width="16" height="16" viewBox="0 0 16 16"><path d="M0 8 H16" stroke="#222" stroke-width="1.2"/><path d="M2 5 L7 8 L2 11Z M14 5 L9 8 L14 11Z" fill="#2a5a8a"/></svg>
<div style="position:absolute;left:1062px;top:499px;width:16px;height:1px;background:#c8c8c8"></div>
<svg style="position:absolute;left:1063px;top:506px;" width="16" height="16" viewBox="0 0 16 16"><path d="M1.5 1 V16 M14.5 1 V16 M1.5 4 H14.5" stroke="#111" stroke-width="1.4"/><path d="M2 4 L5 2.5 V5.5Z M14 4 L11 2.5 V5.5Z" fill="#111"/></svg>
<svg style="position:absolute;left:1063px;top:528px;" width="16" height="16" viewBox="0 0 16 16"><path d="M1 5 L5 1 M11 15 L15 11 M3 3 L13 13" stroke="#111" stroke-width="1.5"/><path d="M3 3 L7 4 L4 7Z M13 13 L9 12 L12 9Z" fill="#111"/></svg>
<svg style="position:absolute;left:1063px;top:550px;" width="16" height="16" viewBox="0 0 16 16"><circle cx="8" cy="8" r="6.8" fill="none" stroke="#444" stroke-width="1.1"/><path d="M8 8 L4 4" stroke="#111" stroke-width="1.3"/><path d="M3.5 3.5 L7 4.5 L4.5 7Z" fill="#111"/></svg>
<svg style="position:absolute;left:1063px;top:572px;" width="16" height="16" viewBox="0 0 16 16"><circle cx="8" cy="8" r="6.8" fill="none" stroke="#444" stroke-width="1.1"/><path d="M4 4 L12 12" stroke="#111" stroke-width="1.3"/><path d="M3.5 3.5 L7 4.5 L4.5 7Z M12.5 12.5 L9 11.5 L11.5 9Z" fill="#111"/></svg>
<svg style="position:absolute;left:1063px;top:594px;" width="16" height="16" viewBox="0 0 16 16"><path d="M1 15 H15 M1 15 L8 4" stroke="#111" stroke-width="1.3"/><path d="M8 5 Q14 8 14 14" fill="none" stroke="#111" stroke-width="1.1"/><path d="M7 3 L10 5 L7 7Z M14 15 L12 11 L16 11Z" fill="#111"/></svg>
<div style="position:absolute;left:1062px;top:616px;width:16px;height:1px;background:#c8c8c8"></div>
<svg style="position:absolute;left:1063px;top:622px;" width="16" height="16" viewBox="0 0 16 16"><path d="M3 2 L2 15 M14 2 L13 15 M3 6 H14" stroke="#111" stroke-width="1.3"/></svg>
<svg style="position:absolute;left:27px;top:135px" width="1003" height="520" viewBox="27 135 1003 520"><rect x="27" y="135" width="1003" height="520" fill="#000"/><path d="M162.0 450.5H217.0M230.0 450.5H285.0M314.0 450.5H369.0M382.0 450.5H437.0M299.3 450.5H300.8M466.0 450.5H521.0M534.0 450.5H589.0M451.3 450.5H452.8M618.0 450.5H619.5M603.3 450.5H604.8M438.0 271.5H493.0M506.0 271.5H561.0M590.0 271.5H645.0M658.0 271.5H713.0M575.3 271.5H576.8M742.0 271.5H797.0M810.0 271.5H865.0M727.3 271.5H728.8M894.0 271.5H895.5M879.3 271.5H880.8M391.5 135.0V157.4M391.5 186.4V241.4M391.5 254.4V309.4M391.5 171.7V173.2M391.5 338.4V393.4M391.5 406.4V461.4M391.5 323.7V325.2M391.5 490.4V545.4M391.5 558.4V613.4M391.5 475.7V477.2M667.5 135.0V157.4M667.5 186.4V241.4M667.5 254.4V309.4M667.5 171.7V173.2M667.5 338.4V393.4M667.5 406.4V461.4M667.5 323.7V325.2M667.5 490.4V545.4M667.5 558.4V613.4M667.5 475.7V477.2" stroke="#8e8ca2" stroke-width="1" fill="none" shape-rendering="crispEdges"/><circle cx="391.5" cy="450.5" r="64" fill="none" stroke="#fff" stroke-width="3.2" shape-rendering="crispEdges"/><circle cx="391.5" cy="450.5" r="32" fill="none" stroke="#fff" stroke-width="3.2" shape-rendering="crispEdges"/><circle cx="667.5" cy="271.3" r="64" fill="none" stroke="#fff" stroke-width="3.2" shape-rendering="crispEdges"/><circle cx="667.5" cy="271.3" r="32" fill="none" stroke="#fff" stroke-width="3.2" shape-rendering="crispEdges"/><path d="M331.6 466.6L451.6 434.4M616.1 307.4L718.9 234.6M391.5 572.5H667.5M922.5 271V450M913 271.5H931M913 450.5H931" stroke="#ee8a8e" stroke-width="1" fill="none"/><path d="M331.60 466.60L336.14 464.24L336.71 466.37Z" fill="#ee8a8e"/><path d="M451.60 434.40L447.06 436.76L446.49 434.63Z" fill="#ee8a8e"/><path d="M616.10 307.40L619.60 303.66L620.84 305.47Z" fill="#ee8a8e"/><path d="M718.90 234.60L715.40 238.34L714.16 236.53Z" fill="#ee8a8e"/><path d="M391.50 572.50L396.50 571.40L396.50 573.60Z" fill="#ee8a8e"/><path d="M667.50 572.50L662.50 573.60L662.50 571.40Z" fill="#ee8a8e"/><path d="M922.50 271.00L923.60 276.00L921.40 276.00Z" fill="#ee8a8e"/><path d="M922.50 450.00L921.40 445.00L923.60 445.00Z" fill="#ee8a8e"/><path d="M686.8 242L689.6 237.2M368.5 477L365 481" stroke="#ee8a8e" stroke-width="1.1"/><g transform="translate(516.6 573) rotate(0)" fill="none" stroke="#f0a0a6" stroke-width="1" stroke-linejoin="round" stroke-linecap="round"><path transform="translate(0.00 0)" d="M5.2 0 L0.4 3.9 L0.4 11.8 L2.5 14.5 L6.6 14.5 L9.5 11.2 L9.5 10.2 L6.6 7.3 L0.4 7.3"/><path transform="translate(13.30 0)" d="M2.6 0 L6 0 L7.9 2.3 L7.9 11.6 L5.6 14.5 L3 14.5 L0.6 11.6 L0.6 2.3 Z"/></g><g transform="translate(923.9 375) rotate(-90)" fill="none" stroke="#f0a0a6" stroke-width="1" stroke-linejoin="round" stroke-linecap="round"><path transform="translate(0.00 0)" d="M0.4 2 L2.5 0 L7 0 L9 2 L9 5 L7 7 L3.5 7 M7 7 L9.5 9.5 L9.5 12.5 L7 14.5 L2.5 14.5 L0.4 12.5"/><path transform="translate(13.30 0)" d="M9.5 7.2 L6.6 7.2 L3 7.2 L0.4 4.8 L0.4 2.5 L3 0 L6.6 0 L9.5 2.8 L9.5 10.5 L5 14.5"/></g><g transform="translate(725.1 219.6) rotate(-34.5)" fill="none" stroke="#f0a0a6" stroke-width="1" stroke-linejoin="round" stroke-linecap="round"><path transform="translate(0.00 0)" d="M2.5 2.5 L7.4 2.5 L9.5 4.7 L9.5 9.8 L7.4 12 L2.5 12 L0.4 9.8 L0.4 4.7 Z M1.6 15 L8.4 -0.5"/><path transform="translate(13.30 0)" d="M0.4 3 L2.8 0.2 L6.6 0.2 L9 2.6 L9 5.5 L0.6 11.5 L0.8 14.5 L5 14.5 L9.6 12.5"/><path transform="translate(26.60 0)" d="M3 0 L6.6 0 L8.8 2.2 L8.8 4.8 L6.6 6.8 L3 6.8 L0.8 4.8 L0.8 2.2 Z M3 6.8 L0.4 9.3 L0.4 12.2 L2.8 14.5 L6.8 14.5 L9.4 12.2 L9.4 9.3 L6.6 6.8"/></g><g transform="translate(697.2 209.2) rotate(-57)" fill="none" stroke="#f0a0a6" stroke-width="1" stroke-linejoin="round" stroke-linecap="round"><path transform="translate(0.00 0)" d="M2.5 2.5 L7.4 2.5 L9.5 4.7 L9.5 9.8 L7.4 12 L2.5 12 L0.4 9.8 L0.4 4.7 Z M1.6 15 L8.4 -0.5"/><path transform="translate(13.30 0)" d="M0.2 2.8 L2.5 0 L2.5 14.5 M0.4 14.5 L4.6 14.5"/><path transform="translate(23.60 0)" d="M7 14.5 L7 0 L0.4 10 L9.5 10"/></g><g transform="translate(280.85 472.4) rotate(-14)" fill="none" stroke="#f0a0a6" stroke-width="1" stroke-linejoin="round" stroke-linecap="round"><path transform="translate(0.00 0)" d="M2.5 2.5 L7.4 2.5 L9.5 4.7 L9.5 9.8 L7.4 12 L2.5 12 L0.4 9.8 L0.4 4.7 Z M1.6 15 L8.4 -0.5"/><path transform="translate(13.30 0)" d="M0.4 3 L2.8 0.2 L6.6 0.2 L9 2.6 L9 5.5 L0.6 11.5 L0.8 14.5 L5 14.5 L9.6 12.5"/><path transform="translate(26.60 0)" d="M3 0 L6.6 0 L8.8 2.2 L8.8 4.8 L6.6 6.8 L3 6.8 L0.8 4.8 L0.8 2.2 Z M3 6.8 L0.4 9.3 L0.4 12.2 L2.8 14.5 L6.8 14.5 L9.4 12.2 L9.4 9.3 L6.6 6.8"/></g><g transform="translate(316.4 524.6) rotate(-48)" fill="none" stroke="#f0a0a6" stroke-width="1" stroke-linejoin="round" stroke-linecap="round"><path transform="translate(0.00 0)" d="M2.5 2.5 L7.4 2.5 L9.5 4.7 L9.5 9.8 L7.4 12 L2.5 12 L0.4 9.8 L0.4 4.7 Z M1.6 15 L8.4 -0.5"/><path transform="translate(13.30 0)" d="M0.2 2.8 L2.5 0 L2.5 14.5 M0.4 14.5 L4.6 14.5"/><path transform="translate(23.60 0)" d="M7 14.5 L7 0 L0.4 10 L9.5 10"/></g><g stroke="#fff" stroke-width="1.2" fill="none"><rect x="47.6" y="626.4" width="8" height="8.2"/><path d="M51.6 626.4V591.5M55.6 630.3H90.5"/><path d="M51.6 580.5L47.5 591.5H56Z M51.6 583L49.8 590M51.6 583L53.4 590"/><path d="M101.8 630.3L90.5 625.8V634.8Z M99 630.3L91.5 628.5M99 630.3L91.5 632"/><path d="M47 562L52 567M57 562L52 567V572"/><path d="M111 625L120 634.8M120 625L111 634.8"/></g><g><rect x="841.5" y="616.5" width="158" height="7.5" fill="none" stroke="#7a7a7a" stroke-width="1"/><rect x="863" y="616.5" width="45" height="3.8" fill="#7a7a7a"/><rect x="841.5" y="620.3" width="21.5" height="3.7" fill="#7a7a7a"/><rect x="908" y="620.3" width="91.5" height="3.7" fill="#7a7a7a"/></g><g font-family="Liberation Sans" font-size="11" fill="#8c8c8c"><text x="859.5" y="613">5</text><text x="992.5" y="613">35</text><text x="838" y="635.5">0</text><text x="902" y="635.5">15</text></g><rect x="1017.5" y="642.5" width="11.5" height="11.5" fill="none" stroke="#fff" stroke-width="1"/><path d="M783 653.5H1028.5V408" stroke="#fff" stroke-width="1" fill="none"/></svg>
<div style="position:absolute;left:0px;top:655px;width:1030px;height:17px;background:#f0f0f0"></div>
<div style="position:absolute;left:28px;top:655px;width:32px;height:16px;background:#f3f3f3;border:1px solid #c8c8c8;box-sizing:border-box"></div>
<div style="position:absolute;left:43px;top:656px;width:1px;height:14px;background:#d0d0d0"></div>
<svg style="position:absolute;left:28px;top:655px;" width="32" height="16" viewBox="0 0 32 16"><path d="M11 4 L6.5 8 L11 12Z M21 4 L25.5 8 L21 12Z" fill="#6e6e6e"/></svg>
<svg style="position:absolute;left:58px;top:655px;" width="100" height="17" viewBox="0 0 100 17"><path d="M40.7 0 L48.3 16.5 H88.4 L96 0Z" fill="#f2f2f2"/><path d="M2 0 L9.6 16.5 H42.1 L49.7 0Z" fill="#f8f8f8"/><path d="M2 0 L9.6 16.5 M42.1 16.5 L49.7 0 M45.2 9.8 L48.3 16.5 M88.4 16.5 L96 0" fill="none" stroke="#111" stroke-width="1"/></svg>
<div class="t" style="left:71px;top:656px;font-size:13px;color:#111">模型</div>
<div class="t" style="left:111px;top:656.5px;font-size:12.4px;color:#111">布局1</div>
<div style="position:absolute;left:0px;top:672px;width:1086px;height:5px;background:#dcdcdc"></div>
<div style="position:absolute;left:0px;top:677px;width:1084px;height:93px;background:#fff"></div>
<div style="position:absolute;left:0px;top:677px;width:1084px;height:2px;background:#767676"></div>
<div style="position:absolute;left:2px;top:677px;width:1px;height:93px;background:#767676"></div>
<div style="position:absolute;left:1085px;top:58px;width:1px;height:714px;background:#a8a8a8"></div>
<div class="t" style="left:4px;top:682px;font-size:13px;line-height:15px;color:#111">命令:</div>
<div class="t" style="left:44px;top:683px;font-family:Liberation Mono;font-size:13px;line-height:15px;color:#111"><span style="display:inline-block;transform:scale(0.894,1.12);transform-origin:0 60%">_DRAWDIAMETRICDIMENSION</span></div>
<div class="t" style="left:11px;top:699px;font-size:13px;line-height:15px;color:#111">选择圆弧或圆:</div>
<div class="t" style="left:4px;top:716px;font-size:13px;line-height:15px;color:#111">命令:</div>
<div class="t" style="left:44px;top:717px;font-family:Liberation Mono;font-size:13px;line-height:15px;color:#111"><span style="display:inline-block;transform:scale(0.894,1.12);transform-origin:0 60%">_DRAWDIAMETRICDIMENSION</span></div>
<div class="t" style="left:11px;top:733px;font-size:13px;line-height:15px;color:#111">选择圆弧或圆:</div>
<div style="position:absolute;left:3px;top:749px;width:1080px;height:1px;background:#a0a0a0"></div>
<div class="t" style="left:4px;top:750px;font-size:13px;line-height:15px;color:#111">命令:</div>
<div style="position:absolute;left:1066px;top:679px;width:16px;height:70px;background:#f0f0f0"></div>
<svg style="position:absolute;left:1066px;top:681px;" width="16" height="12" viewBox="0 0 16 12"><path d="M4 8 L8 4 L12 8" fill="none" stroke="#555" stroke-width="1.5"/></svg>
<div style="position:absolute;left:1066px;top:715px;width:16px;height:17px;background:#cdcdcd"></div>
<svg style="position:absolute;left:1066px;top:735px;" width="16" height="12" viewBox="0 0 16 12"><path d="M4 4 L8 8 L12 4" fill="none" stroke="#555" stroke-width="1.5"/></svg>
<div style="position:absolute;left:995px;top:752px;width:71px;height:17px;background:#f0f0f0"></div>
<svg style="position:absolute;left:995px;top:752px;" width="71" height="17" viewBox="0 0 71 17"><path d="M10 5 L6.5 8.5 L10 12 M59 5 L62.5 8.5 L59 12" fill="none" stroke="#555" stroke-width="1.5"/></svg>
<div style="position:absolute;left:1011px;top:752px;width:17px;height:17px;background:#cdcdcd"></div>
<div style="position:absolute;left:0px;top:770px;width:1086px;height:23px;background:#f0f0f0"></div>
<div style="position:absolute;left:0px;top:793px;width:1086px;height:2px;background:#3a2f2a"></div>
<div class="t" style="left:4px;top:775px;font-size:12.3px;color:#111">5581.176852,</div>
<div class="t" style="left:88px;top:775px;font-size:12.3px;color:#111">-918.238695,</div>
<div class="t" style="left:169px;top:775px;font-size:12.3px;color:#111">0.000000</div>
<div style="position:absolute;left:546px;top:773px;width:33px;height:18px;background:#e5f1fb;border:1px solid #3c8fd0;box-sizing:border-box"></div>
<div style="position:absolute;left:617px;top:773px;width:58px;height:18px;background:#e5f1fb;border:1px solid #3c8fd0;box-sizing:border-box"></div>
<div style="position:absolute;left:677px;top:773px;width:58px;height:18px;background:#e5f1fb;border:1px solid #3c8fd0;box-sizing:border-box"></div>
<div style="position:absolute;left:775px;top:773px;width:34px;height:18px;background:#e5f1fb;border:1px solid #3c8fd0;box-sizing:border-box"></div>
<div class="t" style="left:511px;top:775px;font-size:12px;color:#111">栅格</div>
<div class="t" style="left:549px;top:775px;font-size:12px;color:#111">正交</div>
<div class="t" style="left:583px;top:775px;font-size:12px;color:#111">极轴</div>
<div class="t" style="left:620px;top:775px;font-size:12px;color:#111">对象捕捉</div>
<div class="t" style="left:680px;top:775px;font-size:12px;color:#111">对象追踪</div>
<div class="t" style="left:740px;top:775px;font-size:12px;color:#111">DYN</div>
<div class="t" style="left:778px;top:775px;font-size:12px;color:#111">线宽</div>
<div class="t" style="left:813px;top:775px;font-size:12px;color:#1a3fd0">提交软件问题或增加新功能</div>
<div style="position:absolute;left:966px;top:771px;width:117px;height:22px;background:#f7f7f7"></div>
<svg style="position:absolute;left:969px;top:775px;" width="19" height="14" viewBox="0 0 19 14"><path d="M1 14 L3 1 H7.5 L9 6 L11 1 H15 L18 14 H13.5 L12.5 8 L10 14 H8 L6.5 8 L5.5 14Z" fill="#1aa58a"/><path d="M0 12 L17 3" stroke="#f7f7f7" stroke-width="1.3"/></svg>
<div class="t" style="left:992.5px;top:775px;font-size:13.2px;color:#222">CAD.MxCloud</div>
</body></html>
